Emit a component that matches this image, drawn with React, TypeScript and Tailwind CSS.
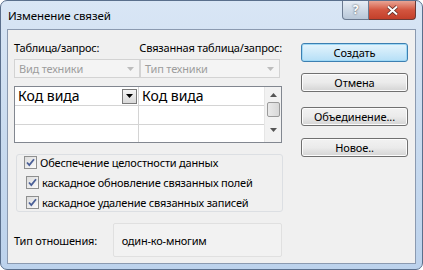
import React from "react";

const font = { fontFamily: '"Noto Sans", "Open Sans", sans-serif' };

function Combo({ text }: { text: string }) {
  return (
    <div className="flex h-[19px] flex-1 items-center justify-between border border-[#d3d3d3] bg-[#f4f4f4] pl-[4px] pr-[5px] text-[11px] tracking-[-0.2px] text-[#9d9d9d]">
      <span className="leading-none">{text}</span>
      <svg width="7" height="4" viewBox="0 0 7 4">
        <path d="M0 0h7L3.5 4z" fill="#bdbdbd" />
      </svg>
    </div>
  );
}

function Check({ label, shift }: { label: string; shift?: boolean }) {
  return (
    <div className={`flex items-center gap-[3px] ${shift ? "pl-[9px]" : "pl-[7px]"}`}>
      <div className="flex h-[13px] w-[13px] items-center justify-center border border-[#8e8f8f] bg-gradient-to-br from-[#dcdcdc] to-[#fafafa]">
        <svg width="9" height="9" viewBox="0 0 9 9">
          <path d="M1 4.5l2.3 2.5L8 1.2" fill="none" stroke="#4a5f97" strokeWidth="1.8" />
        </svg>
      </div>
      <span className="whitespace-nowrap text-[11px] leading-none tracking-[-0.2px] text-black">{label}</span>
    </div>
  );
}

function Btn({ label, primary }: { label: string; primary?: boolean }) {
  return (
    <div
      className={`flex h-[19px] items-center justify-center rounded-[3px] border text-[11px] leading-none tracking-[-0.1px] text-black ${
        primary
          ? "border-[#3c7fb1] bg-gradient-to-b from-[#e5f4fc] to-[#b5dff7] shadow-[inset_0_0_0_1px_#9fd8f5]"
          : "border-[#707070] bg-gradient-to-b from-[#f2f2f2] via-[#ebebeb] to-[#d4d4d4] shadow-[inset_0_0_0_1px_#fcfcfc]"
      }`}
    >
      {label}
    </div>
  );
}

export default function App() {
  return (
    <div className="h-[270px] w-[423px] bg-white" style={font}>
      <div className="flex h-full w-full flex-col rounded-[7px] border border-[#5a6f8c] bg-gradient-to-b from-[#d9e6f5] via-[#c9dbef] to-[#bcd2ec]">
        {/* title bar */}
        <div className="flex h-[28px] items-start justify-between">
          <span className="pl-[7px] pt-[9px] text-[11.5px] leading-none tracking-[-0.1px] text-black">Изменение связей</span>
          <div className="mr-[6px] flex">
            <div className="flex h-[19px] w-[27px] items-center justify-center rounded-bl-[4px] border border-t-0 border-[#6b7a90] bg-gradient-to-b from-[#e6edf5] to-[#b8c7d8] text-[12px] font-bold leading-none text-white [text-shadow:0_0_2px_#333]">
              ?
            </div>
            <div className="flex h-[19px] w-[47px] items-center justify-center rounded-br-[4px] border border-l-0 border-t-0 border-[#6b3a36] bg-gradient-to-b from-[#e8a494] via-[#d3553f] to-[#c33f2a]">
              <svg width="13" height="11" viewBox="0 0 13 11">
                <path d="M2 1.5l9 8M11 1.5l-9 8" stroke="#5a2a24" strokeWidth="3.6" />
                <path d="M2 1.5l9 8M11 1.5l-9 8" stroke="#ffffff" strokeWidth="2" />
              </svg>
            </div>
          </div>
        </div>

        {/* client area */}
        <div className="mx-[6px] mb-[5px] flex flex-1 gap-[19px] border border-[#8b9ab0] bg-[#f0f0f0] pl-[6px] pt-[12px]">
          <div className="flex w-[268px] flex-col">
            <div className="flex whitespace-nowrap text-[11px] leading-none tracking-[-0.2px] text-black">
              <span className="w-[126px]">Таблица/запрос:</span>
              <span>Связанная таблица/запрос:</span>
            </div>
            <div className="mt-[6px] flex">
              <div className="flex w-[126px]">
                <Combo text="Вид техники" />
              </div>
              <div className="flex w-[140px]">
                <Combo text="Тип техники" />
              </div>
            </div>

            {/* grid */}
            <div className="mt-[8px] flex h-[57px] border border-[#828790] bg-white">
              <div className="flex flex-1 flex-col">
                <div className="flex h-[19px] border-b border-[#d4d4d4]">
                  <div className="flex w-[124px] items-center justify-between border-r border-[#d4d4d4] pl-[3px] pr-[1px]">
                    <span className="text-[14px] leading-none text-black">Код вида</span>
                    <div className="flex h-[15px] w-[15px] items-center justify-center border border-[#7a7a7a] bg-gradient-to-b from-[#f4f4f4] to-[#d9d9d9]">
                      <svg width="7" height="4" viewBox="0 0 7 4">
                        <path d="M0 0h7L3.5 4z" fill="#000" />
                      </svg>
                    </div>
                  </div>
                  <div className="flex flex-1 items-center pl-[3px]">
                    <span className="text-[14px] leading-none text-black">Код вида</span>
                  </div>
                </div>
                <div className="flex h-[19px] border-b border-[#d4d4d4]">
                  <div className="w-[124px] border-r border-[#d4d4d4]" />
                  <div className="flex-1" />
                </div>
                <div className="flex flex-1">
                  <div className="w-[124px] border-r border-[#d4d4d4]" />
                  <div className="flex-1" />
                </div>
              </div>
              <div className="flex w-[17px] flex-col items-center border-l border-[#e6e6e6] bg-[#f2f2f2]">
                <div className="flex h-[15px] items-center">
                  <svg width="7" height="4" viewBox="0 0 7 4">
                    <path d="M0 4h7L3.5 0z" fill="#555" />
                  </svg>
                </div>
                <div className="h-[15px] w-[13px] rounded-[2px] border border-[#9a9a9a] bg-gradient-to-r from-[#eaeaea] to-[#d8d8d8]" />
                <div className="flex flex-1 items-center">
                  <svg width="7" height="4" viewBox="0 0 7 4">
                    <path d="M0 0h7L3.5 4z" fill="#555" />
                  </svg>
                </div>
              </div>
            </div>

            {/* options */}
            <div className="ml-[2px] mt-[11px] flex h-[58px] w-[267px] flex-col justify-center gap-[7px] rounded-[3px] border border-[#dcdfe3] pb-[2px]">
              <Check label="Обеспечение целостности данных" />
              <Check label="каскадное обновление связанных полей" shift />
              <Check label="каскадное удаление связанных записей" shift />
            </div>

            <div className="mt-[11px] flex items-center">
              <span className="w-[99px] whitespace-nowrap text-[11px] leading-none tracking-[-0.2px] text-black">Тип отношения:</span>
              <div className="flex h-[34px] w-[170px] items-start rounded-[2px] border border-[#e0e0e0] bg-[#f2f2f2] pl-[8px] pt-[11px] text-[11px] leading-none tracking-[-0.2px] text-black">
                один-ко-многим
              </div>
            </div>
          </div>

          {/* buttons */}
          <div className="mt-[1px] flex w-[107px] flex-col">
            <Btn label="Создать" primary />
            <div className="mt-[11px]">
              <Btn label="Отмена" />
            </div>
            <div className="mt-[15px]">
              <Btn label="Объединение..." />
            </div>
            <div className="mt-[12px]">
              <Btn label="Новое.." />
            </div>
          </div>
        </div>
      </div>
    </div>
  );
}
